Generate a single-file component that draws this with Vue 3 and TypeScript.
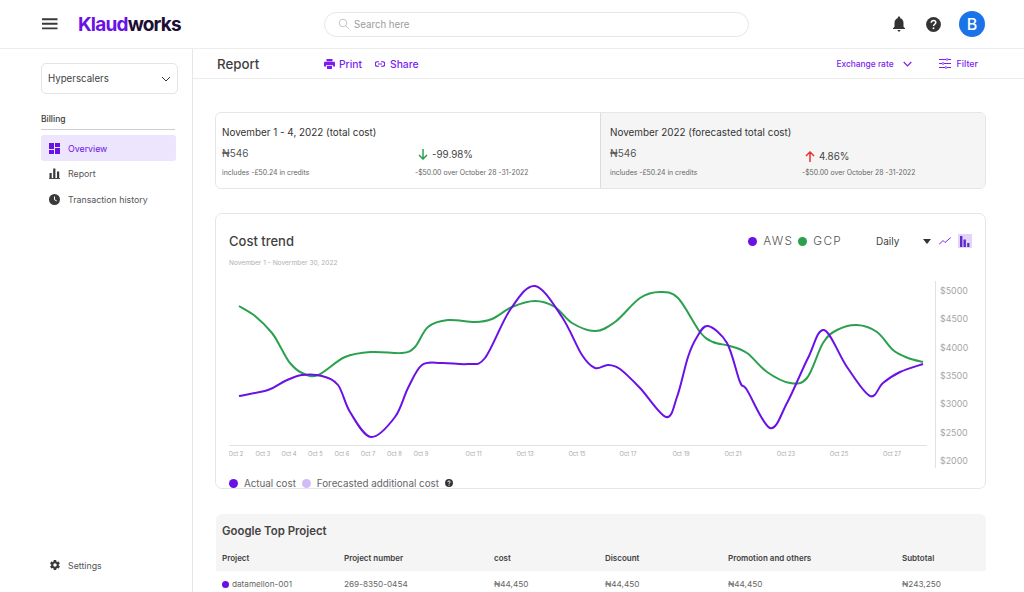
<script setup lang="ts">
type Pt = [number, number]

const purple: Pt[] = [[239,396],[268,390],[285,381],[302,375],[322,376],[338,385],[350,412],[371,437],[395,417],[408,388],[422,365],[442,363],[468,364],[485,358],[510,310],[535,286],[562,317],[582,355],[595,368],[608,365],[620,369],[640,388],[666,417],[677,397],[688,357],[697,337],[708,326],[727,343],[740,382],[747,390],[770,428],[787,403],[808,358],[824,330],[847,367],[870,396],[883,383],[900,372],[923,364]]
const green: Pt[] = [[239,306],[255,316],[272,333],[281,348],[290,363],[302,373],[318,375],[345,357],[372,352],[402,353],[415,347],[428,327],[448,320],[475,322],[492,319],[512,307],[535,301],[555,307],[572,323],[595,331],[615,322],[640,298],[660,292],[678,298],[700,332],[713,342],[730,346],[747,353],[767,372],[790,383],[807,378],[823,343],[837,330],[857,325],[877,332],[893,350],[908,358],[923,362]]

function smooth(p: Pt[]): string {
  let d = `M${p[0][0]} ${p[0][1]}`
  for (let i = 0; i < p.length - 1; i++) {
    const a = p[Math.max(i - 1, 0)]
    const b = p[i]
    const c = p[i + 1]
    const e = p[Math.min(i + 2, p.length - 1)]
    const c1x = b[0] + (c[0] - a[0]) / 6
    const c1y = b[1] + (c[1] - a[1]) / 6
    const c2x = c[0] - (e[0] - b[0]) / 6
    const c2y = c[1] - (e[1] - b[1]) / 6
    d += ` C${c1x.toFixed(1)} ${c1y.toFixed(1)} ${c2x.toFixed(1)} ${c2y.toFixed(1)} ${c[0]} ${c[1]}`
  }
  return d
}

const purplePath = smooth(purple)
const greenPath = smooth(green)

const xLabels: { t: string; x: number }[] = [
  { t: 'Oct 2', x: 236 }, { t: 'Oct 3', x: 263 }, { t: 'Oct 4', x: 289 }, { t: 'Oct 5', x: 315.5 },
  { t: 'Oct 6', x: 342 }, { t: 'Oct 7', x: 368 }, { t: 'Oct 8', x: 394.5 }, { t: 'Oct 9', x: 421 },
  { t: 'Oct 11', x: 473.5 }, { t: 'Oct 13', x: 525 }, { t: 'Oct 15', x: 577 }, { t: 'Oct 17', x: 628 },
  { t: 'Oct 19', x: 681 }, { t: 'Oct 21', x: 733 }, { t: 'Oct 23', x: 786 }, { t: 'Oct 25', x: 839 }, { t: 'Oct 27', x: 892 }
]
const yLabels = ['$5000', '$4500', '$4000', '$3500', '$3000', '$2500', '$2000']
</script>

<template>
  <div class="page">
    <header class="topbar">
      <svg class="menu" width="16" height="12" viewBox="0 0 16 12"><path d="M0 1.2h15.5M0 5.8h15.5M0 10.4h15.5" stroke="#3a3a3a" stroke-width="1.9" /></svg>
      <div class="logo"><span class="k">Klaud</span><span>works</span></div>
      <div class="search">
        <svg width="12" height="12" viewBox="0 0 12 12" fill="none" stroke="#c4c4c4" stroke-width="1"><circle cx="5" cy="5" r="3.8" /><path d="M8 8l3.2 3.2" /></svg>
        <span>Search here</span>
      </div>
      <div class="top-icons">
        <svg width="14" height="16" viewBox="0 0 14 16"><path fill="#333" d="M7 0.6c.7 0 1.2.5 1.2 1.2v.5C10.400 2.800 11.500 4.700 11.500 7v3.800l1.500 1.500v.7H1v-.7l1.500-1.500V7c0-2.300 1.100-4.200 3.300-4.700v-.5C5.800 1.100 6.300.6 7 .6zM5.500 14h3c0 .9-.7 1.500-1.500 1.500S5.500 14.900 5.500 14z" /></svg>
        <svg width="15" height="15" viewBox="0 0 15 15"><circle cx="7.500" cy="7.500" r="7.400" fill="#333" /><path d="M5.200 5.800c0-1.400 1-2.200 2.300-2.200s2.300.8 2.300 2c0 1.600-2.300 1.700-2.300 3.400" fill="none" stroke="#fff" stroke-width="1.500" /><circle cx="7.500" cy="11.200" r=".95" fill="#fff" /></svg>
        <div class="avatar">B</div>
      </div>
    </header>

    <div class="body">
      <aside class="sidebar">
        <div class="select">
          <span>Hyperscalers</span>
          <svg width="10" height="6" viewBox="0 0 10 6" fill="none" stroke="#333" stroke-width="1"><path d="M1 1l4 4 4-4" /></svg>
        </div>
        <div class="group">Billing</div>
        <nav class="nav">
          <a class="item active">
            <svg width="11" height="11" viewBox="0 0 11 11" fill="#6a12e6"><rect x="0" y="0" width="5" height="6" /><rect x="6" y="0" width="5" height="4" /><rect x="0" y="7" width="5" height="4" /><rect x="6" y="5" width="5" height="6" /></svg>
            <span>Overview</span>
          </a>
          <a class="item">
            <svg width="11" height="11" viewBox="0 0 11 11" fill="#3a3a3a"><rect x="0.500" y="5" width="2.200" height="5" /><rect x="4.200" y="0.500" width="2.200" height="9.500" /><rect x="8" y="3.500" width="2.200" height="6.500" /><rect x="0" y="10" width="11" height="0.900" /></svg>
            <span>Report</span>
          </a>
          <a class="item">
            <svg width="11" height="11" viewBox="0 0 11 11"><circle cx="5.500" cy="5.500" r="5.500" fill="#3a3a3a" /><path d="M5.500 2.500v3.200l2.200 1.200" fill="none" stroke="#fff" stroke-width="1" /></svg>
            <span>Transaction history</span>
          </a>
        </nav>
        <a class="item settings">
          <svg width="12" height="12" viewBox="0 0 24 24"><path fill="#3a3a3a" d="M19.400 13c.1-.3.100-.7.100-1s0-.7-.1-1l2.100-1.600c.2-.2.200-.4.100-.6l-2-3.500c-.1-.2-.4-.3-.6-.2l-2.500 1c-.5-.4-1.100-.7-1.700-1l-.4-2.600c0-.3-.2-.5-.5-.5h-4c-.3 0-.5.200-.5.500l-.4 2.600c-.6.300-1.200.6-1.700 1l-2.500-1c-.2-.1-.5 0-.6.200l-2 3.500c-.1.200-.1.500.1.600L4.500 11c0 .3-.1.700-.1 1s0 .7.100 1l-2.100 1.600c-.2.200-.2.400-.1.600l2 3.500c.1.200.4.300.6.200l2.500-1c.5.400 1.100.7 1.700 1l.4 2.600c0 .3.200.5.500.5h4c.3 0 .5-.2.500-.5l.4-2.600c.6-.3 1.200-.6 1.700-1l2.500 1c.2.100.5 0 .6-.2l2-3.500c.1-.2.100-.5-.1-.6L19.400 13zM12 15.500a3.500 3.500 0 110-7 3.500 3.500 0 010 7z" /></svg>
          <span>Settings</span>
        </a>
      </aside>

      <main class="main">
        <div class="subbar">
          <h1>Report</h1>
          <a class="action first">
            <svg width="11" height="10" viewBox="0 0 11 10" fill="#7a1df0"><path d="M2.500 0h6v2.200h-6zM1.200 2.800h8.600c.7 0 1.200.5 1.200 1.200v3.400H8.800V6H2.200v1.400H0V4c0-.7.500-1.200 1.200-1.200zM3 6.800h5V10H3z" /></svg>
            <span>Print</span>
          </a>
          <a class="action">
            <svg width="10" height="6" viewBox="0 0 10 6" fill="none" stroke="#7a1df0" stroke-width="1.100"><path d="M4 .7H2.500a2.300 2.300 0 000 4.600H4M6 .7h1.500a2.300 2.300 0 010 4.600H6M3 3h4" /></svg>
            <span>Share</span>
          </a>
          <div class="spacer"></div>
          <a class="rate">
            <span>Exchange rate</span>
            <svg width="9" height="6" viewBox="0 0 9 6" fill="none" stroke="#7a1df0" stroke-width="1.200"><path d="M.7 1l3.800 3.800L8.300 1" /></svg>
          </a>
          <a class="filter">
            <svg width="12" height="11" viewBox="0 0 12 11" fill="none" stroke="#7a1df0" stroke-width="1"><path d="M0 1.500h7M9 1.500h3M8 0v3M0 5.500h3M5 5.500h7M4 4v3M0 9.500h6M8 9.500h4M7 8v3" /></svg>
            <span>Filter</span>
          </a>
        </div>

        <section class="summary">
          <div class="sum-col">
            <h3>November 1 - 4, 2022 (total cost)</h3>
            <div class="sum-grid">
              <div>
                <div class="amount">₦546</div>
                <div class="note">includes -£50.24 in credits</div>
              </div>
              <div class="delta-col">
                <div class="delta">
                  <svg width="10" height="11" viewBox="0 0 10 11" fill="none" stroke="#2ba04e" stroke-width="1.500"><path d="M5 0v10M1 6l4 4 4-4" /></svg>
                  <span>-99.98%</span>
                </div>
                <div class="note">-$50.00 over October 28 -31-2022</div>
              </div>
            </div>
          </div>
          <div class="sum-col alt">
            <h3>November 2022 (forecasted total cost)</h3>
            <div class="sum-grid">
              <div>
                <div class="amount">₦546</div>
                <div class="note">includes -£50.24 in credits</div>
              </div>
              <div class="delta-col">
                <div class="delta low">
                  <svg width="10" height="11" viewBox="0 0 10 11" fill="none" stroke="#e5322d" stroke-width="1.500"><path d="M5 11V1M1 5l4-4 4 4" /></svg>
                  <span>4.86%</span>
                </div>
                <div class="note">-$50.00 over October 28 -31-2022</div>
              </div>
            </div>
          </div>
        </section>

        <section class="chart-card">
          <div class="chart-head">
            <div>
              <h2>Cost trend</h2>
              <p>November 1 - Novermber 30, 2022</p>
            </div>
            <div class="spacer"></div>
            <div class="series">
              <i class="dot purple"></i><span>AWS</span>
              <i class="dot green"></i><span>GCP</span>
            </div>
            <div class="daily">
              <span>Daily</span>
              <svg width="8" height="5" viewBox="0 0 8 5"><path d="M0 0h8L4 5z" fill="#333" /></svg>
            </div>
            <svg class="line-ic" width="12" height="8" viewBox="0 0 12 8" fill="none" stroke="#6a12e6" stroke-width="0.900"><path d="M0 7.500L4 3.500l2 2L11.800.5" /></svg>
            <div class="bar-ic">
              <svg width="10" height="11" viewBox="0 0 10 11" fill="#5a2bc8"><rect x="0" y="0" width="2.400" height="11" /><rect x="3.500" y="3.500" width="2.400" height="7.500" /><rect x="7.200" y="7" width="2.200" height="4" /></svg>
            </div>
          </div>

          <div class="plot-row">
            <svg class="plot" width="706" height="190" viewBox="229 280 706 190">
              <line x1="229" y1="445.500" x2="927" y2="445.500" stroke="#e2e2e2" />
              <path :d="greenPath" fill="none" stroke="#2ba04e" stroke-width="2" />
              <path :d="purplePath" fill="none" stroke="#6a12e6" stroke-width="2" />
              <text v-for="l in xLabels" :key="l.t" :x="l.x" y="456" text-anchor="middle" class="xl">{{ l.t }}</text>
            </svg>
            <div class="y-axis">
              <span v-for="y in yLabels" :key="y">{{ y }}</span>
            </div>
          </div>

          <div class="legend">
            <i class="ldot solid"></i><span>Actual cost</span>
            <i class="ldot light"></i><span>Forecasted additional cost</span>
            <svg class="q" width="8" height="8" viewBox="0 0 15 15"><circle cx="7.500" cy="7.500" r="7.400" fill="#333" /><path d="M5.200 5.800c0-1.400 1-2.200 2.300-2.200s2.300.8 2.300 2c0 1.600-2.300 1.700-2.300 3.400" fill="none" stroke="#fff" stroke-width="1.800" /><circle cx="7.500" cy="11.400" r="1.100" fill="#fff" /></svg>
          </div>
        </section>

        <section class="table-card">
          <h2>Google Top Project</h2>
          <div class="trow thead">
            <span>Project</span><span>Project number</span><span>cost</span><span>Discount</span><span>Promotion and others</span><span>Subtotal</span>
          </div>
          <div class="trow tbody">
            <span class="proj"><i></i>datamellon-001</span><span>269-8350-0454</span><span>₦44,450</span><span>₦44,450</span><span>₦44,450</span><span>₦243,250</span>
          </div>
        </section>
      </main>
    </div>
  </div>
</template>

<style>
html, body { margin: 0; background: #fff; overflow: hidden; }
</style>

<style scoped>
.page {
  width: 1024px;
  height: 592px;
  overflow: hidden;
  display: flex;
  flex-direction: column;
  font-family: Inter, "Noto Sans", sans-serif;
  color: #3a3a3a;
  background: #fff;
}
.topbar {
  height: 48px;
  flex: none;
  box-sizing: content-box;
  border-bottom: 1px solid #ececec;
  display: flex;
  align-items: center;
  padding-left: 42px;
  padding-right: 39px;
}
.menu { flex: none; }
.logo {
  margin-left: 20px;
  width: 246px;
  font-size: 19px;
  font-weight: 700;
  letter-spacing: -0.800px;
  color: #1c0f33;
}
.k { color: #6a12e6; }
.search {
  width: 425px;
  height: 25px;
  box-sizing: border-box;
  border: 1px solid #e6e6e6;
  border-radius: 13px;
  display: flex;
  align-items: center;
  gap: 4px;
  padding-left: 13px;
  font-size: 9.700px;
  color: #9c9c9c;
}
.top-icons {
  margin-left: auto;
  display: flex;
  align-items: center;
}
.top-icons svg:nth-child(2) { margin-left: 20px; }
.avatar {
  margin-left: 18px;
  width: 26px;
  height: 26px;
  border-radius: 50%;
  background: #1a73e8;
  color: #fff;
  font-size: 16px;
  font-weight: 500;
  display: flex;
  align-items: center;
  justify-content: center;
}
.body { flex: 1; display: flex; min-height: 0; }
.sidebar {
  width: 193px;
  flex: none;
  box-sizing: border-box;
  border-right: 1px solid #e6e6e6;
  padding: 14px 16px 14px 41px;
  display: flex;
  flex-direction: column;
}
.select {
  width: 137px;
  height: 31px;
  box-sizing: border-box;
  border: 1px solid #e4e4e4;
  border-radius: 5px;
  display: flex;
  align-items: center;
  justify-content: space-between;
  padding: 0 6px;
  font-size: 9.700px;
  color: #3f3f3f;
}
.group {
  margin-top: 19px;
  padding-bottom: 4px;
  width: 134px;
  font-size: 8.500px;
  font-weight: 500;
  line-height: 12px;
  border-bottom: 1px solid #cfcfcf;
}
.nav {
  margin-top: 5px;
  display: flex;
  flex-direction: column;
}
.item {
  height: 25.500px;
  width: 135px;
  flex: none;
  box-sizing: border-box;
  display: flex;
  align-items: center;
  gap: 8px;
  padding-left: 8px;
  font-size: 8.800px;
  color: #555;
}
.active {
  height: 26px;
  background: #ede4fd;
  border-radius: 3px;
  color: #6a12e6;
}
.settings { margin-top: auto; gap: 7px; }
.main {
  flex: 1;
  min-width: 0;
  display: flex;
  flex-direction: column;
}
.subbar {
  height: 29px;
  flex: none;
  border-bottom: 1px solid #ececec;
  display: flex;
  align-items: center;
  padding-left: 24px;
  padding-right: 46px;
}
.subbar h1 {
  margin: 0;
  width: 107px;
  font-size: 13.300px;
  font-weight: 500;
  color: #3f3f3f;
}
.action {
  display: flex;
  align-items: center;
  gap: 5px;
  font-size: 10.300px;
  font-weight: 500;
  color: #7a1df0;
}
.action.first { margin-right: 13px; gap: 4px; }
.spacer { flex: 1; }
.rate {
  display: flex;
  align-items: center;
  gap: 9px;
  font-size: 8.400px;
  font-weight: 500;
  color: #7a1df0;
}
.filter {
  margin-left: 27px;
  display: flex;
  align-items: center;
  gap: 6px;
  font-size: 8.900px;
  font-weight: 500;
  color: #7a1df0;
}
.summary {
  margin: 33px 38px 0 22px;
  height: 77px;
  flex: none;
  box-sizing: border-box;
  border: 1px solid #e6e6e6;
  border-radius: 6px;
  display: flex;
  overflow: hidden;
}
.sum-col {
  width: 384px;
  flex: none;
  box-sizing: border-box;
  padding: 12px 6px 0 6px;
}
.sum-col.alt {
  flex: 1;
  background: #f5f5f5;
  border-left: 1px solid #dcdcdc;
  padding: 12px 9px 0 9px;
}
.sum-col h3 {
  margin: 0;
  font-size: 9.900px;
  font-weight: 400;
  line-height: 14px;
  color: #333;
}
.sum-grid {
  display: grid;
  grid-template-columns: 193px 1fr;
  margin-top: 7px;
}
.alt .sum-grid { grid-template-columns: 192px 1fr; }
.amount {
  font-size: 10px;
  font-weight: 400;
  line-height: 14px;
  color: #555;
}
.note {
  margin-top: 7px;
  font-size: 6.900px;
  line-height: 11px;
  color: #666;
}
.delta {
  display: flex;
  align-items: center;
  gap: 4px;
  padding-left: 3px;
  height: 14px;
  margin-top: 1px;
  margin-bottom: -1px;
  font-size: 9.800px;
  font-weight: 400;
  color: #444;
}
.delta.low { margin-top: 3px; margin-bottom: -3px; }
.chart-card {
  margin: 24px 38px 0 22px;
  height: 276px;
  flex: none;
  box-sizing: border-box;
  border: 1px solid #e6e6e6;
  border-radius: 7px;
  padding: 0 13px;
  overflow: hidden;
}
.chart-head {
  display: flex;
  align-items: flex-start;
  height: 66px;
  padding-top: 18px;
  box-sizing: border-box;
}
.chart-head h2 {
  margin: 0;
  font-size: 13px;
  font-weight: 500;
  line-height: 18px;
  color: #3f3f3f;
}
.chart-head p {
  margin: 8px 0 0;
  font-size: 6.600px;
  line-height: 10px;
  color: #b0b0b0;
}
.series {
  display: flex;
  align-items: center;
  height: 18px;
  font-size: 11.800px;
  font-weight: 300;
  letter-spacing: 1.300px;
  color: #555;
}
.dot {
  width: 9px;
  height: 9px;
  border-radius: 50%;
  margin-right: 6px;
}
.series span + .dot { margin-left: 5px; }
.purple { background: #6a12e6; }
.green { background: #2ba04e; }
.daily {
  margin-left: 34px;
  width: 55px;
  height: 18px;
  display: flex;
  align-items: center;
  justify-content: space-between;
  font-size: 10px;
  color: #3f3f3f;
}
.line-ic { margin-left: 8px; margin-top: 5px; }
.bar-ic {
  margin-left: 7px;
  width: 14px;
  height: 14px;
  background: #e2d4fb;
  display: flex;
  align-items: center;
  justify-content: center;
  margin-top: 2px;
}
.plot-row { display: flex; height: 190px; }
.plot { flex: none; display: block; }
.xl { font-size: 5.800px; fill: #a8a8a8; font-family: Inter, sans-serif; }
.y-axis {
  margin: 1px 0 2px;
  flex: 1;
  box-sizing: border-box;
  border-left: 1px solid #e2e2e2;
  padding: 4px 0 1px 4px;
  display: flex;
  flex-direction: column;
  justify-content: space-between;
  font-size: 8.900px;
  line-height: 12px;
  color: #a6a6a6;
}
.legend {
  display: flex;
  align-items: center;
  height: 16px;
  margin-top: 5px;
  font-size: 9.800px;
  color: #666;
}
.ldot {
  width: 9px;
  height: 9px;
  border-radius: 50%;
  margin-right: 6px;
}
.ldot.solid { background: #6a12e6; }
.ldot.light { background: #d2bcf8; margin-left: 6px; }
.q { margin-left: 6px; }
.table-card {
  margin: 25px 38px 0 23px;
  flex: none;
}
.table-card h2 {
  margin: 0;
  padding: 10px 6px 0;
  height: 34px;
  box-sizing: border-box;
  background: #f5f5f5;
  border-radius: 6px 6px 0 0;
  font-size: 11.400px;
  font-weight: 600;
  line-height: 14px;
  color: #444;
}
.trow {
  display: grid;
  grid-template-columns: 122px 150px 111px 123px 174px 1fr;
  padding-left: 6px;
  align-items: center;
}
.thead {
  height: 23px;
  padding-bottom: 4px;
  box-sizing: border-box;
  background: #f5f5f5;
  font-size: 8px;
  font-weight: 600;
  color: #3f3f3f;
}
.tbody {
  height: 26px;
  font-size: 8.200px;
  color: #666;
}
.proj { display: flex; align-items: center; gap: 3px; }
.proj i {
  width: 7px;
  height: 7px;
  border-radius: 50%;
  background: #6a12e6;
}
</style>
